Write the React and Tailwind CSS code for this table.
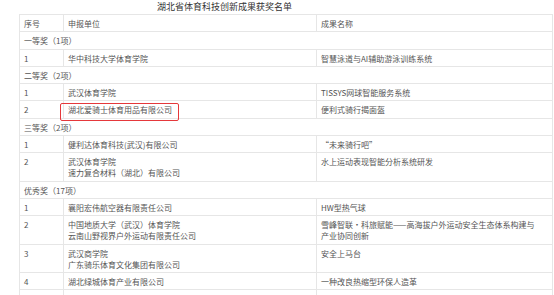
import React from "react";

const rows = [
  { type: "head" },
  { type: "group", text: "一等奖（1项）" },
  { no: "1", unit: ["华中科技大学体育学院"], name: ["智慧泳道与AI辅助游泳训练系统"] },
  { type: "group", text: "二等奖（2项）" },
  { no: "1", unit: ["武汉体育学院"], name: ["TISSYS网球智能服务系统"] },
  { no: "2", unit: ["湖北爱骑士体育用品有限公司"], name: ["便利式骑行揭面盔"], hl: true },
  { type: "group", text: "三等奖（2项）" },
  { no: "1", unit: ["健利达体育科技(武汉)有限公司"], name: ["“未来骑行吧”"] },
  { no: "2", unit: ["武汉体育学院", "速力复合材料（湖北）有限公司"], name: ["水上运动表现智能分析系统研发"] },
  { type: "group", text: "优秀奖（17项）" },
  { no: "1", unit: ["襄阳宏伟航空器有限责任公司"], name: ["HW型热气球"] },
  { no: "2", unit: ["中国地质大学（武汉）体育学院", "云南山野视界户外运动有限责任公司"], name: ["雪峰智联·科旅赋能——高海拔户外运动安全生态体系构建与", "产业协同创新"] },
  { no: "3", unit: ["武汉商学院", "广东骑乐体育文化集团有限公司"], name: ["安全上马台"] },
  { no: "4", unit: ["湖北绿城体育产业有限公司"], name: ["一种改良热缩型环保人造革"] },
  { no: "", unit: [""], name: [""] },
];

const td = "border border-[#e6e6e6] px-[4px] pt-[3px] pb-[2.3px] align-top leading-[11px]";

function Lines({ items }) {
  return items.map((t, i) => <div key={i} className="whitespace-nowrap min-h-[11px]">{t}</div>);
}

export default function App() {
  return (
    <div
      className="w-[554px] h-[295px] overflow-hidden bg-white flex"
      style={{ fontFamily: '"Noto Sans CJK SC", "Noto Sans", sans-serif' }}
    >
      <div className="flex-1 pl-[19px] pr-[1px]">
        <div className="h-[14px] pl-[138px] text-[9px] leading-[14px] text-[#333]">
          湖北省体育科技创新成果获奖名单
        </div>
        <table className="border-collapse text-[8px] text-[#555] w-[533px] table-fixed">
          <colgroup>
            <col className="w-[44px]" />
            <col className="w-[253px]" />
            <col className="w-[236px]" />
          </colgroup>
          <tbody>
            {rows.map((r, i) => {
              if (r.type === "head")
                return (
                  <tr key={i}>
                    <td className={td}>序号</td>
                    <td className={td}>申报单位</td>
                    <td className={td}>成果名称</td>
                  </tr>
                );
              if (r.type === "group")
                return (
                  <tr key={i}>
                    <td className={td} colSpan={3}>{r.text}</td>
                  </tr>
                );
              return (
                <tr key={i}>
                  <td className={td}>{r.no}</td>
                  <td className={td + " relative"}>
                    <Lines items={r.unit} />
                    {r.hl && (
                      <span className="absolute left-[-4px] top-[2px] w-[119px] h-[18px] border-[1.5px] border-[#e5383b] rounded-[2px]" />
                    )}
                  </td>
                  <td className={td}>
                    <Lines items={r.name} />
                  </td>
                </tr>
              );
            })}
          </tbody>
        </table>
      </div>
      <div className="w-[1px] bg-[#f2f2f2]" />
    </div>
  );
}
